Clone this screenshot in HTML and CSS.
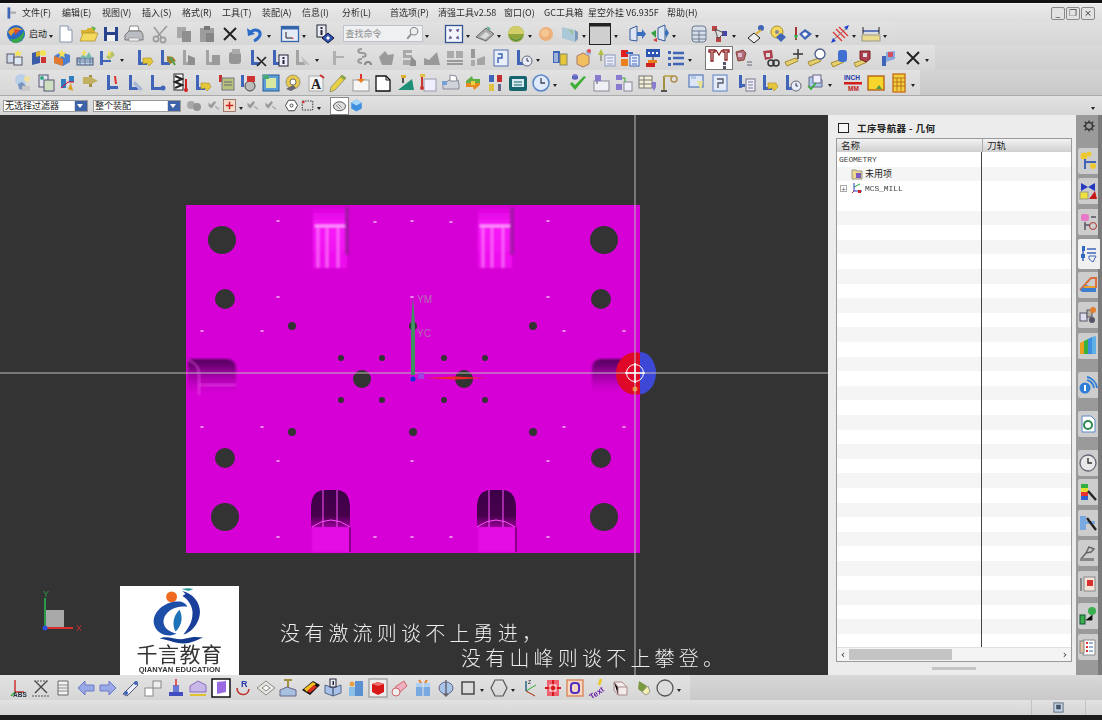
FILE: index.html
```html
<!DOCTYPE html>
<html lang="zh">
<head>
<meta charset="utf-8">
<title>NX CAM</title>
<link rel="stylesheet" href="styles.css">
</head>
<body>
<svg class="defs" aria-hidden="true">
<defs>
<g id="L"><path d="M3 2h3v12h6v3H3z" fill="#3f64b8"/></g>
<g id="Lg"><path d="M3 2h3v12h6v3H3z" fill="#a3a3a3"/></g>
<symbol id="nx" viewBox="0 0 20 20"><circle cx="10" cy="10" r="9" fill="#2b68c4"/><path d="M2 8c5-6 11-5 15-2-5-1-9 1-12 6z" fill="#e9a02a"/><path d="M4 15c5 1 10-1 14-8 1 6-3 12-9 12-2 0-4-2-5-4z" fill="#38a848"/><path d="M8 5l6 1-5 5z" fill="#e04c30"/></symbol>
<symbol id="page" viewBox="0 0 20 20"><path d="M4 2h8l4 4v12H4z" fill="#fff" stroke="#8794ab"/><path d="M12 2v4h4" fill="#dfe6f2" stroke="#8794ab"/></symbol>
<symbol id="open" viewBox="0 0 20 20"><path d="M2 6h5l2-2h7v6H2z" fill="#d8b232"/><path d="M1 17l3-8h15l-3 8z" fill="#f3d95c" stroke="#a98b22" stroke-width=".7"/><path d="M12 2l5 2-2 3z" fill="#5fae45"/></symbol>
<symbol id="save" viewBox="0 0 20 20"><rect x="3" y="3" width="14" height="14" fill="#29448c"/><rect x="6" y="3" width="8" height="5" fill="#e4e4e4"/><rect x="6" y="11" width="8" height="6" fill="#f2f2f2"/></symbol>
<symbol id="print" viewBox="0 0 20 20"><path d="M6 2h8l1 5H5z" fill="#fff" stroke="#888"/><path d="M1 11l4-4h12l2 4v5H1z" fill="#b9bcc2" stroke="#777"/><rect x="5" y="14" width="10" height="3" fill="#eee" stroke="#888" stroke-width=".6"/></symbol>
<symbol id="cut" viewBox="0 0 20 20"><g fill="none" stroke="#9b9b9b" stroke-width="1.600"><circle cx="5" cy="15" r="2.600"/><circle cx="12" cy="16" r="2.600"/><path d="M6 13L16 2M11 14L3 3"/></g></symbol>
<symbol id="copyg" viewBox="0 0 20 20"><rect x="3" y="3" width="9" height="11" fill="#a8a8a8"/><rect x="8" y="7" width="9" height="11" fill="#8f8f8f"/></symbol>
<symbol id="pasteg" viewBox="0 0 20 20"><rect x="3" y="4" width="14" height="14" fill="#9d9d9d"/><rect x="7" y="2" width="6" height="4" fill="#777"/><rect x="9" y="9" width="8" height="9" fill="#858585"/></symbol>
<symbol id="xx" viewBox="0 0 20 20"><path d="M4 4l12 12M16 4L4 16" stroke="#222" stroke-width="2" fill="none"/></symbol>
<symbol id="undo" viewBox="0 0 20 20"><path d="M5 9c4-5 11-3 10 2-1 3-4 5-6 6" fill="none" stroke="#2b6cc8" stroke-width="3"/><path d="M2 4l1 8 7-2z" fill="#2b6cc8"/></symbol>
<symbol id="view" viewBox="0 0 20 20"><rect x="1.500" y="2.500" width="17" height="15" fill="#e4ebf6" stroke="#3566ac" stroke-width="1.300"/><rect x="1.500" y="2.500" width="17" height="3" fill="#3566ac"/><path d="M6 8v6h6" stroke="#222" fill="none"/><path d="M12 13v2h2z" fill="#d33"/></symbol>
<symbol id="info" viewBox="0 0 20 20"><rect x="2" y="1" width="9" height="12" fill="#e9edf5" stroke="#223"/><rect x="5.500" y="3" width="2" height="2" fill="#223"/><rect x="5.500" y="6" width="2" height="5" fill="#223"/><path d="M13 9l6 5-6 5-6-5z" fill="#2f55b0" stroke="#113"/><path d="M13 12l2 2-2 2-2-2z" fill="#fff"/></symbol>
<symbol id="find" viewBox="0 0 20 20"><circle cx="12" cy="7" r="5" fill="#eee" stroke="#888" stroke-width="1.500"/><path d="M8 11l-5 6" stroke="#888" stroke-width="2.500"/></symbol>
<symbol id="fit" viewBox="0 0 20 20"><rect x="1.500" y="1.500" width="17" height="17" fill="#f2f5fb" stroke="#34528f" stroke-width="1.300"/><path d="M5 5l3 1-2 2zM15 5l-3 1 2 2zM5 15l3-1-2-2zM15 15l-3-1 2-2z" fill="#d84b4b" stroke="#2c62bd" stroke-width=".6"/></symbol>
<symbol id="dish" viewBox="0 0 20 20"><path d="M1 13L11 4l8 6-8 7z" fill="#a9acab" stroke="#666"/><path d="M5 13l6-5 4 3-5 4z" fill="#d8dcd8"/><path d="M12 2l4 3-3 1z" fill="#5a9"/></symbol>
<symbol id="sphere" viewBox="0 0 20 20"><circle cx="10" cy="10" r="8" fill="#8fa53b"/><path d="M2 10a8 8 0 0 1 16 0z" fill="#d3cf68"/><path d="M4 13c4 4 8 4 12 0-2 5-10 5-12 0z" fill="#3c8650"/></symbol>
<symbol id="orange" viewBox="0 0 20 20"><circle cx="9" cy="10" r="7" fill="#eeb078"/><circle cx="8" cy="9" r="4" fill="#f3c694"/></symbol>
<symbol id="door" viewBox="0 0 20 20"><path d="M2 3l13 3v12L2 14z" fill="#a9c8d8"/><path d="M15 6l3 2v7l-3 3z" fill="#7e9ab8"/><path d="M8 5l5 2v4z" fill="#9ec08a"/></symbol>
<symbol id="sq" viewBox="0 0 24 24"><rect x="1.500" y="1.500" width="21" height="21" fill="#cfcfcf" stroke="#222"/><rect x="1.500" y="1.500" width="21" height="3" fill="#222"/></symbol>
<symbol id="arr1" viewBox="0 0 20 20"><path d="M3 5l7-3v15l-7-1z" fill="#dde6f2" stroke="#345a9a"/><path d="M10 8h5V5l4 5-4 5v-3h-5z" fill="#3a6fbe"/></symbol>
<symbol id="arr2" viewBox="0 0 20 20"><path d="M8 4l7-3v16l-7-2z" fill="#dde6f2" stroke="#345a9a"/><path d="M15 7h1V4l3 5-3 5v-3h-1z" fill="#3a6fbe"/><path d="M1 9l5-3v8z" fill="#35a043"/><path d="M3 16l4-2v4z" fill="#d33"/></symbol>
<symbol id="layer" viewBox="0 0 20 20"><rect x="3" y="2" width="14" height="16" rx="3" fill="#d7dee9" stroke="#6b7a8f"/><path d="M3 7h14M3 11h14M3 15h14M10 7v11" stroke="#6b7a8f" fill="none"/></symbol>
<symbol id="net" viewBox="0 0 20 20"><rect x="2" y="2" width="5" height="5" fill="#b44"/><rect x="12" y="7" width="5" height="5" fill="#44a"/><rect x="6" y="13" width="5" height="5" fill="#b44"/><path d="M5 5l9 4-6 6z" fill="none" stroke="#555"/></symbol>
<symbol id="dia" viewBox="0 0 20 20"><path d="M7 9l6 5-6 5-6-5z" fill="#eee" stroke="#222"/><circle cx="14" cy="4" r="3" fill="#3f64b8"/><path d="M9 10l5-4" stroke="#e0b030" stroke-width="2"/></symbol>
<symbol id="dia2" viewBox="0 0 20 20"><circle cx="9" cy="8" r="6" fill="#f4d95c" stroke="#a88f22"/><path d="M13 9l5 4-5 5-5-5z" fill="#3f64b8"/><circle cx="9" cy="8" r="2" fill="#889"/></symbol>
<symbol id="dia3" viewBox="0 0 20 20"><path d="M12 5l7 5-7 6-6-6z" fill="#3f64b8"/><path d="M12 8l3 2-3 3-3-3z" fill="#fff"/><path d="M3 3v13" stroke="#a33" stroke-width="2"/><path d="M1 11l4 0-2 5z" fill="#3a4"/></symbol>
<symbol id="xarr" viewBox="0 0 20 20"><path d="M2 17L18 3" stroke="#777"/><path d="M6 5l9 9M9 3l9 9M3 8l9 9" stroke="#d33" stroke-width="1.300"/><path d="M1 19l5-2-3-3zM19 1l-5 2 3 3z" fill="#24c"/></symbol>
<symbol id="meas" viewBox="0 0 20 20"><rect x="1" y="11" width="18" height="6" fill="#e9d98c" stroke="#998"/><path d="M2 7h16" stroke="#24a" stroke-width="1.300"/><path d="M2 3v7M18 3v7" stroke="#222"/></symbol>
<symbol id="mill1" viewBox="0 0 20 20"><rect x="1" y="6" width="7" height="9" fill="#cfd9ea" stroke="#556"/><rect x="8" y="9" width="8" height="8" fill="#dfe8f5" stroke="#556"/><path d="M12 1l1 3 3 0-2 2 1 3-3-2-3 2 1-3-2-2 3 0z" fill="#f4e15a"/></symbol>
<symbol id="mill2" viewBox="0 0 20 20"><path d="M3 5l8-2v12l-8 2z" fill="#3a5ba8"/><path d="M7 4l4-1v5l-4 1z" fill="#e0b030"/><circle cx="14" cy="5" r="3" fill="#f4e15a"/><rect x="12" y="9" width="5" height="6" fill="#c33"/></symbol>
<symbol id="mill3" viewBox="0 0 20 20"><path d="M2 8l7-4 9 3v7l-7 4-9-3z" fill="#4d7fd0"/><path d="M2 8l9 3v7l-9-3z" fill="#e07a30"/><path d="M9 1l2 3 3 0-2 3 1 3-3-2-3 2 1-3-2-3 3 0z" fill="#f4e15a"/></symbol>
<symbol id="mill4" viewBox="0 0 20 20"><rect x="2" y="10" width="16" height="7" fill="#bcd3ea" stroke="#457"/><path d="M2 12h16M2 14h16M5 10v7M10 10v7M15 10v7" stroke="#457" stroke-width=".6"/><path d="M5 10l3-4 3 3 3-5 3 6z" fill="#7ba"/><path d="M9 1l1 3h2l-2 2 1 2-2-1-2 1 1-2-2-2h2z" fill="#f4e15a"/></symbol>
<symbol id="mill5" viewBox="0 0 20 20"><rect x="2" y="3" width="3" height="14" fill="#3f64b8"/><path d="M5 12h8v2H5z" fill="#3f64b8"/><path d="M8 9l6-6 3 4-6 5z" fill="#b9c26a"/><path d="M10 1l1 3 3 0-2 2 1 3-3-2z" fill="#f4e15a"/></symbol>
<symbol id="wren" viewBox="0 0 20 20"><use href="#L"/><path d="M8 10l8 0 2 4-4 4-2-3-4 1z" fill="#e5c63c" stroke="#a88f22" stroke-width=".6"/></symbol>
<symbol id="wren2" viewBox="0 0 20 20"><use href="#L"/><path d="M9 8l6 1 3 4-6 3-3-3z" fill="#a07f30"/><path d="M12 9l5 8" stroke="#56a14a" stroke-width="2"/></symbol>
<symbol id="g1" viewBox="0 0 20 20"><use href="#Lg"/><path d="M8 7l7 3v7H8z" fill="#8e8e8e"/></symbol>
<symbol id="g2" viewBox="0 0 20 20"><use href="#Lg"/><rect x="9" y="7" width="8" height="10" fill="#9a9a9a"/></symbol>
<symbol id="g3" viewBox="0 0 20 20"><rect x="4" y="4" width="12" height="12" rx="3" fill="#969696"/><rect x="7" y="1" width="8" height="5" fill="#aaa"/></symbol>
<symbol id="lx" viewBox="0 0 20 20"><use href="#L"/><path d="M9 9l9 9M18 9l-9 9" stroke="#222" stroke-width="1.600"/></symbol>
<symbol id="li" viewBox="0 0 20 20"><use href="#L"/><rect x="9" y="7" width="9" height="11" fill="#eef" stroke="#223"/><rect x="12.500" y="9" width="2" height="2" fill="#223"/><rect x="12.500" y="12" width="2" height="4" fill="#223"/></symbol>
<symbol id="lg" viewBox="0 0 20 20"><use href="#Lg"/><path d="M8 8l9 9-6-1z" fill="#bcbcbc"/></symbol>
<symbol id="gs1" viewBox="0 0 20 20"><path d="M3 3h3v14H3zM6 8h8v2H6z" fill="#b0b0b0"/></symbol>
<symbol id="mn" viewBox="0 0 20 20"><path d="M5 2h4v16H5z" fill="#3f64b8"/><path d="M9 8h8v3H9z" fill="#a8a8a8"/></symbol>
<symbol id="gs2" viewBox="0 0 20 20"><path d="M9 1C4 1 4 5 9 5c5 0 5 4 0 4M9 11c-5 0-5 4 0 4" stroke="#999" stroke-width="2" fill="none"/><path d="M12 17a3 3 0 0 1 6 0" stroke="#888" stroke-width="2" fill="none"/></symbol>
<symbol id="gs3" viewBox="0 0 20 20"><path d="M3 9l6-6 3 4 6-1-2 11H6z" fill="#9a9a9a"/></symbol>
<symbol id="gs4" viewBox="0 0 20 20"><path d="M4 2h9v3H7v2h6v3H4zM4 12h9v5H4z" fill="#aaa"/><path d="M12 8l5 5v5h-6z" fill="#8f8f8f"/></symbol>
<symbol id="gs5" viewBox="0 0 20 20"><path d="M2 17V10l5 2 8-8 3 13z" fill="#999"/></symbol>
<symbol id="gs6" viewBox="0 0 20 20"><rect x="2" y="3" width="7" height="7" fill="#aaa"/><rect x="11" y="3" width="7" height="7" fill="#aaa"/><path d="M2 13h16M2 16h16" stroke="#999" stroke-width="2"/></symbol>
<symbol id="gs7" viewBox="0 0 20 20"><rect x="3" y="1" width="4" height="9" fill="#999"/><rect x="3" y="12" width="4" height="6" fill="#aaa"/><path d="M9 11l8-3v9H9z" fill="#a5a5a5"/></symbol>
<symbol id="pg2" viewBox="0 0 20 20"><rect x="3" y="2" width="14" height="16" fill="#e8eefa" stroke="#5570b0"/><path d="M7 6h4v4H7v5" stroke="#3f64b8" stroke-width="1.500" fill="none"/></symbol>
<symbol id="clk" viewBox="0 0 20 20"><circle cx="10" cy="10" r="8" fill="#dfeafa" stroke="#5a88c8" stroke-width="1.600"/><path d="M10 5v5h4" stroke="#445" fill="none" stroke-width="1.300"/></symbol>
<symbol id="lclk" viewBox="0 0 20 20"><use href="#L"/><circle cx="13" cy="13" r="5" fill="#e8eefa" stroke="#667"/><path d="M13 10v3h2" stroke="#334" fill="none"/></symbol>
<symbol id="bars" viewBox="0 0 20 20"><path d="M2 3h3v3H2zM2 9h3v3H2zM2 15h3v3H2z" fill="#3f64b8"/><path d="M7 5h11M7 10h11M7 16h11" stroke="#3f64b8" stroke-width="2.600"/></symbol>
<symbol id="cols" viewBox="0 0 20 20"><rect x="2" y="3" width="7" height="12" fill="#3f64b8"/><rect x="9" y="6" width="7" height="11" fill="#e8c63c" stroke="#886"/><path d="M4 5v9M6 5v9" stroke="#fff"/></symbol>
<symbol id="cube" viewBox="0 0 20 20"><path d="M3 8l6-3 6 3v8l-6 3-6-3z" fill="#f0c060" stroke="#a76"/><rect x="12" y="2" width="5" height="5" fill="#a3bce0"/><circle cx="15" cy="3" r="2" fill="#e05050"/></symbol>
<symbol id="flag" viewBox="0 0 20 20"><path d="M4 1l3 6H1z" fill="#b5c040"/><path d="M4 7v6" stroke="#665"/><rect x="8" y="7" width="10" height="11" fill="#eef" stroke="#8a97b5"/><path d="M10 10h6M10 13h6M10 16h6" stroke="#8a97b5"/></symbol>
<symbol id="redl" viewBox="0 0 20 20"><rect x="1" y="2" width="7" height="7" fill="#e02020"/><rect x="1" y="11" width="7" height="7" fill="#e88020"/><rect x="10" y="7" width="9" height="11" fill="#e8effa" stroke="#3f64b8"/><path d="M12 10h5M12 13h5M12 16h5" stroke="#3f64b8"/><path d="M6 5h7" stroke="#3f64b8" stroke-width="2"/></symbol>
<symbol id="prog" viewBox="0 0 20 20"><rect x="3" y="1" width="14" height="8" fill="#2a55b0"/><path d="M5 5h2M9 5h2M13 5h2" stroke="#fff" stroke-width="2"/><path d="M10 9v3" stroke="#333"/><rect x="5" y="12" width="9" height="3" fill="#e88020"/><rect x="3" y="15" width="9" height="4" fill="#d02020"/></symbol>
<symbol id="act" viewBox="0 0 24 24"><path d="M2 4h6v2H6v9H4V6H2zM9 4l3 5 3-5M16 4h6v2h-2v8h-2V6h-2z" fill="none" stroke="#8a2020" stroke-width="1.300"/><rect x="16" y="16" width="3" height="3" fill="#556"/><rect x="16" y="20" width="3" height="3" fill="#556"/></symbol>
<symbol id="rtab" viewBox="0 0 20 20"><path d="M2 4l7-2 3 3-2 7-6 1z" fill="#b06a7a" stroke="#843"/><rect x="4" y="5" width="4" height="4" fill="#dbc"/><path d="M13 14h5M13 17h5" stroke="#667"/></symbol>
<symbol id="rkey" viewBox="0 0 20 20"><path d="M2 3l9-1 1 8-8 2z" fill="#b04050"/><rect x="5" y="5" width="4" height="4" fill="#ddd"/><circle cx="10" cy="15" r="3" fill="none" stroke="#333" stroke-width="1.500"/><circle cx="15" cy="15" r="3" fill="none" stroke="#333" stroke-width="1.500"/></symbol>
<symbol id="plus" viewBox="0 0 20 20"><path d="M1 14l11-4 2 3-11 5z" fill="#e8cf70" stroke="#a08a30"/><path d="M14 1v10M9 6h10" stroke="#333" stroke-width="1.400"/></symbol>
<symbol id="loop" viewBox="0 0 20 20"><path d="M1 14l11-4 2 3-11 5z" fill="#e8cf70" stroke="#a08a30"/><circle cx="13" cy="6" r="5" fill="#fff" stroke="#4a5a8a" stroke-width="1.300"/></symbol>
<symbol id="cylo" viewBox="0 0 20 20"><path d="M1 15l11-4 2 3-11 5z" fill="#e8cf70" stroke="#a08a30"/><rect x="8" y="2" width="9" height="12" rx="3" fill="#3f6fd0"/></symbol>
<symbol id="cubo" viewBox="0 0 20 20"><path d="M1 15l11-4 2 3-11 5z" fill="#e8cf70" stroke="#a08a30"/><path d="M7 3h10v8l-4 3-6-3z" fill="#b04050" stroke="#722"/><rect x="10" y="5" width="4" height="4" fill="#ddd"/></symbol>
<symbol id="blk" viewBox="0 0 20 20"><rect x="4" y="8" width="4" height="10" fill="#3f64b8"/><path d="M8 4l9-1v8l-9 3z" fill="#8aa8e0"/><rect x="10" y="4" width="5" height="5" fill="#d05060"/></symbol>
<symbol id="rec" viewBox="0 0 20 20"><circle cx="8" cy="7" r="6" fill="#b8d0e8"/><path d="M5 11l4-2 6 6-3 3-6-2z" fill="#7a94c0"/><circle cx="14" cy="6" r="3" fill="#f0e0a0"/><rect x="9" y="13" width="8" height="5" fill="#c8c8c8"/></symbol>
<symbol id="g4" viewBox="0 0 20 20"><rect x="3" y="2" width="9" height="12" fill="#e0e4ee" stroke="#557"/><rect x="8" y="7" width="10" height="11" fill="#cfe0c0" stroke="#557"/><circle cx="6" cy="5" r="2" fill="#3a8"/></symbol>
<symbol id="blu" viewBox="0 0 20 20"><path d="M3 6h5v9H3zM11 3h5v6h-5z" fill="#2f7fc0"/><path d="M3 15l7-6 6 0" stroke="#d03" fill="none"/><path d="M13 10l2 8-5-2z" fill="#d8a020"/></symbol>
<symbol id="lf" viewBox="0 0 20 20"><rect x="8" y="2" width="3" height="12" fill="#a09040"/><path d="M2 4h8l7 4-7 3H2z" fill="#c0b060"/></symbol>
<symbol id="l1" viewBox="0 0 20 20"><path d="M4 2h3v15H4z" fill="#3f64b8"/><path d="M7 13h8v3H7z" fill="#3f64b8"/><path d="M12 3l1 8" stroke="#d33" stroke-width="2"/></symbol>
<symbol id="l2" viewBox="0 0 20 20"><use href="#L"/><path d="M9 8l8 8-3 2-7-7z" fill="#a8b8d8"/></symbol>
<symbol id="l3" viewBox="0 0 20 20"><path d="M3 2h3v15H3z" fill="#3f64b8"/><path d="M6 14h7v3H6z" fill="#3f64b8"/><circle cx="15" cy="15" r="2.500" fill="#3f64b8"/></symbol>
<symbol id="zig" viewBox="0 0 20 20"><rect x="3" y="1" width="9" height="16" fill="#fff" stroke="#222"/><path d="M4 3l7 3-7 3 7 3-7 3" stroke="#222" stroke-width="2" fill="none"/><path d="M15 6v10" stroke="#d02020" stroke-width="2"/><circle cx="15" cy="17" r="2" fill="#d02020"/></symbol>
<symbol id="rcy" viewBox="0 0 20 20"><rect x="3" y="2" width="3" height="7" fill="#c83030"/><rect x="6" y="5" width="12" height="12" fill="#b8c27a" stroke="#778"/><path d="M8 9h8M8 12h8" stroke="#667"/></symbol>
<symbol id="lbox" viewBox="0 0 20 20"><rect x="3" y="2" width="3" height="12" fill="#3f64b8"/><circle cx="12" cy="13" r="5" fill="#bbb" stroke="#444"/><rect x="9" y="3" width="8" height="6" fill="#c33"/></symbol>
<symbol id="mon" viewBox="0 0 20 20"><rect x="2" y="2" width="16" height="16" fill="#5a9fd8" stroke="#2a5a9a"/><rect x="5" y="5" width="10" height="10" fill="#d8e8a0"/><path d="M2 2h6v4H2z" fill="#4a7"/></symbol>
<symbol id="sw" viewBox="0 0 20 20"><circle cx="10" cy="9" r="7" fill="#e8c94c" stroke="#997"/><circle cx="10" cy="9" r="3" fill="#fff" stroke="#776"/><path d="M3 16l7-4 3 3-5 3z" fill="#667"/></symbol>
<symbol id="atxt" viewBox="0 0 20 20"><rect x="3" y="3" width="14" height="15" fill="#f4f4f4" stroke="#aaa"/><text x="5" y="16" font-family="Liberation Serif" font-size="14" font-weight="700" fill="#222">A</text><path d="M14 2l4 3" stroke="#c33" stroke-width="2"/></symbol>
<symbol id="pen" viewBox="0 0 20 20"><path d="M14 2l4 3-11 12-5 2 1-5z" fill="#e8d040" stroke="#997"/><path d="M14 2l4 3-2 2-4-3z" fill="#8a4"/></symbol>
<symbol id="pup" viewBox="0 0 20 20"><rect x="2" y="7" width="16" height="11" fill="#f6f6f6" stroke="#999"/><path d="M10 1v7" stroke="#d33" stroke-width="2"/><path d="M6 6h8l-4 4z" fill="#e88020"/></symbol>
<symbol id="pgb" viewBox="0 0 20 20"><path d="M3 3h10l4 4v11H3z" fill="#fff" stroke="#111" stroke-width="1.300"/><path d="M13 3v4h4" fill="none" stroke="#111"/></symbol>
<symbol id="tri" viewBox="0 0 20 20"><path d="M2 17L16 6l2 11z" fill="#1f8f78"/><path d="M7 2v8" stroke="#222" stroke-width="1.500"/><path d="M5 2h5v3H5z" fill="#e0b030"/></symbol>
<symbol id="ptr" viewBox="0 0 20 20"><rect x="6" y="6" width="12" height="12" fill="#eef" stroke="#99a"/><path d="M4 2v13" stroke="#c33" stroke-width="2"/><circle cx="4" cy="15" r="2" fill="#c33"/><rect x="2" y="1" width="5" height="3" fill="#e0c040"/></symbol>
<symbol id="prn2" viewBox="0 0 20 20"><path d="M2 12l6-5h9l1 5v4H2z" fill="#d0d4da" stroke="#889"/><path d="M9 2l6 1 1 5H9z" fill="#fff" stroke="#889"/><rect x="1" y="8" width="5" height="4" fill="#7aa0d8"/></symbol>
<symbol id="swp" viewBox="0 0 20 20"><path d="M3 8l6-5 1 3h7v4H3z" fill="#5fae45"/><path d="M17 12l-6 5-1-3H3v-4h14z" fill="#e88a20"/><rect x="8" y="8" width="4" height="4" fill="#eed040"/></symbol>
<symbol id="tls" viewBox="0 0 20 20"><rect x="3" y="2" width="5" height="7" fill="#3f64b8"/><rect x="11" y="2" width="5" height="7" fill="#c03030"/><rect x="3" y="11" width="5" height="7" fill="#e0c040"/><rect x="12" y="11" width="3" height="7" fill="#668"/></symbol>
<symbol id="calc" viewBox="0 0 20 20"><rect x="1" y="3" width="18" height="15" rx="2" fill="#17666f"/><rect x="4" y="6" width="12" height="8" fill="#d6e8f0"/><path d="M6 9h8M6 12h8" stroke="#17666f"/></symbol>
<symbol id="chk" viewBox="0 0 20 20"><path d="M2 11l5 6L18 4l-2-1-9 9-3-3z" fill="#3fae36"/><circle cx="7" cy="4" r="3" fill="#8a7ad0"/><rect x="4" y="3" width="6" height="3" fill="#5a6ac0"/></symbol>
<symbol id="bx2" viewBox="0 0 20 20"><rect x="3" y="8" width="15" height="10" fill="#eef0f6" stroke="#889"/><rect x="4" y="2" width="6" height="6" fill="#8a7ad0"/><path d="M6 8v3" stroke="#556"/></symbol>
<symbol id="bx3" viewBox="0 0 20 20"><rect x="2" y="2" width="6" height="5" fill="#8a7ad0"/><rect x="10" y="9" width="8" height="9" fill="#eef0f6" stroke="#889"/><rect x="2" y="11" width="6" height="6" fill="#8a7ad0"/><path d="M8 5h3v4" stroke="#3a3" fill="none"/></symbol>
<symbol id="tbl" viewBox="0 0 20 20"><rect x="2" y="3" width="13" height="12" fill="#f4f0d8" stroke="#777"/><path d="M2 7h13M2 11h13M7 3v12" stroke="#777"/><path d="M15 9h4v5l-2 4-2-4z" fill="#8a7ad0"/></symbol>
<symbol id="pin" viewBox="0 0 20 20"><path d="M4 3v15" stroke="#a09040" stroke-width="2"/><path d="M4 3h9" stroke="#c0b060" stroke-width="2"/><circle cx="14" cy="6" r="3" fill="none" stroke="#b09050" stroke-width="1.500"/><path d="M1 18h6" stroke="#555" stroke-width="2"/></symbol>
<symbol id="frm" viewBox="0 0 20 20"><rect x="2" y="2" width="14" height="12" fill="#dde6f5" stroke="#6a88c0" stroke-width="1.400"/><path d="M10 8l6 0-2 10z" fill="#e4e090"/><path d="M4 3h5v3H4z" fill="#b6c8e8"/></symbol>
<symbol id="frm2" viewBox="0 0 20 20"><rect x="3" y="2" width="14" height="16" fill="#e4ebf8" stroke="#7a94c8" stroke-width="1.300"/><path d="M7 6h6v4H8v5" stroke="#556" fill="none" stroke-width="1.300"/></symbol>
<symbol id="lst" viewBox="0 0 20 20"><path d="M2 2h3v13H2zM5 11h3v3H5z" fill="#3f64b8"/><rect x="9" y="6" width="9" height="12" fill="#eef" stroke="#778"/><path d="M11 9h5M11 12h5M11 15h5" stroke="#778"/></symbol>
<symbol id="cg" viewBox="0 0 20 20"><path d="M3 4h10l3 3v7H3z" fill="#a8c8e8" stroke="#668"/><rect x="7" y="2" width="8" height="8" fill="#eef" stroke="#668"/><path d="M2 13l3 3 5-6" stroke="#3a3" fill="none" stroke-width="1.600"/></symbol>
<symbol id="inch" viewBox="0 0 20 20"><text x="1" y="7" font-family="Liberation Sans" font-size="6.500" font-weight="700" fill="#2538a8">INCH</text><rect x="1" y="9" width="18" height="2.500" fill="#d02020"/><text x="5" y="18" font-family="Liberation Sans" font-size="6.500" font-weight="700" fill="#c01818">MM</text></symbol>
<symbol id="note" viewBox="0 0 20 20"><rect x="2" y="3" width="16" height="14" fill="#f6d52c" stroke="#b25a10" stroke-width="1.300"/><path d="M13 12l3 4h-6z" fill="#4a9a4a"/></symbol>
<symbol id="abacus" viewBox="0 0 20 20"><rect x="4" y="1" width="12" height="18" fill="#f0d040" stroke="#c86a10" stroke-width="1.300"/><path d="M4 5h12M4 9h12M4 13h12M8 5v13M12 5v13" stroke="#b06010" stroke-width=".8"/></symbol>
<symbol id="gray" viewBox="0 0 20 20"><circle cx="7" cy="9" r="4" fill="#a8a8a8"/><circle cx="13" cy="11" r="4" fill="#949494"/></symbol>
<symbol id="wg" viewBox="0 0 20 20"><path d="M2 6l3 3 5-5 2 2-6 8-4-3z" fill="#9a9a9a"/><path d="M11 11l5 4" stroke="#a8a8a8" stroke-width="2"/></symbol>
<symbol id="sel" viewBox="0 0 20 20"><rect x="2" y="2" width="16" height="16" fill="#f3dcc8" stroke="#8a5a50"/><path d="M10 5v10M5 10h10" stroke="#d02020" stroke-width="2"/></symbol>
<symbol id="tgt" viewBox="0 0 20 20"><path d="M6 3h8l4 7-4 7H6l-4-7z" fill="#fff" stroke="#444" stroke-width="1.300"/><circle cx="10" cy="10" r="2" fill="none" stroke="#444" stroke-width="1.300"/></symbol>
<symbol id="dsh" viewBox="0 0 20 20"><rect x="3" y="4" width="14" height="12" fill="none" stroke="#333" stroke-dasharray="2 1.500" stroke-width="1.300"/><path d="M3 4h3v3H3z" fill="#d33"/></symbol>
<symbol id="mous" viewBox="0 0 20 20"><ellipse cx="10" cy="11" rx="8" ry="6" fill="#ddd" stroke="#555" stroke-width="1.300"/><path d="M5 9l6 6M8 8l5 5" stroke="#777"/></symbol>
<symbol id="cub2" viewBox="0 0 20 20"><path d="M10 2l7 4v8l-7 4-7-4V6z" fill="#3f8fe0"/><path d="M3 6l7 4 7-4-7-4z" fill="#a8d8f8"/></symbol>
<symbol id="abs" viewBox="0 0 20 20"><path d="M7 2v12h9" stroke="#c33" fill="none" stroke-width="1.500"/><path d="M7 14L3 18" stroke="#3a3" stroke-width="1.500"/><text x="5" y="19" font-family="Liberation Sans" font-size="6.500" font-weight="700" fill="#234">ABS</text></symbol>
<symbol id="xd" viewBox="0 0 20 20"><path d="M4 3l12 12M16 3L4 15" stroke="#444" stroke-width="1.300"/><path d="M1 18h18M3 3h14" stroke="#555" stroke-dasharray="2 1"/></symbol>
<symbol id="dcl" viewBox="0 0 20 20"><path d="M5 3h10v14H5z" fill="#f2f2f2" stroke="#666"/><path d="M5 7h10M5 10h10M5 13h10" stroke="#888"/></symbol>
<symbol id="al" viewBox="0 0 20 20"><path d="M18 7h-9V3L2 10l7 7v-4h9z" fill="#9aa8e8" stroke="#6a7ac8"/></symbol>
<symbol id="ar" viewBox="0 0 20 20"><path d="M2 7h9V3l7 7-7 7v-4H2z" fill="#9aa8e8" stroke="#6a7ac8"/></symbol>
<symbol id="dgn" viewBox="0 0 20 20"><path d="M2 16L14 4l3 3L6 18z" fill="#e8effa" stroke="#557"/><circle cx="5" cy="15" r="2" fill="#3f64b8"/><circle cx="15" cy="5" r="2" fill="#3f64b8"/></symbol>
<symbol id="sqs" viewBox="0 0 20 20"><rect x="2" y="10" width="8" height="8" fill="#fff" stroke="#888"/><rect x="10" y="3" width="8" height="7" fill="#eee" stroke="#888"/></symbol>
<symbol id="stp" viewBox="0 0 20 20"><rect x="3" y="14" width="14" height="4" fill="#3f4fc0"/><rect x="7" y="7" width="6" height="7" fill="#6a78d8"/><path d="M10 1v7" stroke="#d33" stroke-width="1.500"/></symbol>
<symbol id="pkt" viewBox="0 0 20 20"><path d="M2 8l8-5 8 4v7H2z" fill="#c8b8e8" stroke="#8a6ac0"/><path d="M2 17h16" stroke="#e0c030" stroke-width="2"/></symbol>
<symbol id="pcb" viewBox="0 0 20 20"><rect x="1" y="1" width="18" height="18" fill="#fff" stroke="#111" stroke-width="1.500"/><path d="M6 4l9-1v11l-9 2z" fill="#9a6ae0"/></symbol>
<symbol id="rr" viewBox="0 0 20 20"><path d="M4 10c0 8 11 9 12 1" stroke="#c03030" fill="none" stroke-width="1.600"/><text x="8" y="9" font-family="Liberation Sans" font-size="9" font-weight="700" fill="#2538a8">R</text></symbol>
<symbol id="rhb" viewBox="0 0 20 20"><path d="M10 3l9 7-9 7-9-7z" fill="#e8e8e0" stroke="#888"/><path d="M10 7l4 3-4 3-4-3z" fill="#f6f6f6" stroke="#888"/></symbol>
<symbol id="tee" viewBox="0 0 20 20"><path d="M6 2h8M10 2v8" stroke="#a09040" stroke-width="2"/><path d="M2 12l7-3 9 3v6H2z" fill="#a8c0e0" stroke="#668"/></symbol>
<symbol id="stk" viewBox="0 0 20 20"><path d="M1 12L12 3l7 4-10 10z" fill="#111"/><path d="M3 11l9-7 3 2-9 8z" fill="#f0c020"/><path d="M6 13l7-6 3 2-7 6z" fill="#d83020"/></symbol>
<symbol id="ibox" viewBox="0 0 20 20"><path d="M2 7l8 3v8l-8-3zM18 7l-8 3v8l8-3z" fill="#a8c0e8" stroke="#568"/><rect x="7" y="1" width="6" height="8" fill="#eee" stroke="#224"/><rect x="9.500" y="3" width="1.500" height="4" fill="#224"/></symbol>
<symbol id="blk2" viewBox="0 0 20 20"><rect x="3" y="9" width="7" height="9" fill="#8ac0e8"/><rect x="9" y="3" width="8" height="15" fill="#5a90d0"/><circle cx="6" cy="6" r="2.500" fill="#e8a040"/></symbol>
<symbol id="rbx" viewBox="0 0 20 20"><rect x="1" y="1" width="18" height="18" fill="#eee" stroke="#888"/><path d="M4 6l6-2 6 2v8l-6 3-6-3z" fill="#d81818"/><path d="M4 6l6 2 6-2-6-2z" fill="#f07070"/></symbol>
<symbol id="pb" viewBox="0 0 20 20"><path d="M4 9l9-6 3 5-8 7z" fill="#f0b0c0" stroke="#c66"/><circle cx="5" cy="14" r="4" fill="#eee" stroke="#c66"/></symbol>
<symbol id="gift" viewBox="0 0 20 20"><rect x="3" y="8" width="14" height="10" fill="#7aa8e0"/><rect x="3" y="5" width="14" height="4" fill="#b0d0f0"/><path d="M6 2l2 3M14 2l-2 3" stroke="#e08030" stroke-width="2"/><path d="M10 5v13" stroke="#e8e8e8"/></symbol>
<symbol id="cyl" viewBox="0 0 20 20"><ellipse cx="10" cy="10" rx="7" ry="6" fill="#a8c4e8" stroke="#668"/><path d="M10 2v16" stroke="#667" stroke-width="1.500"/><path d="M7 16l3 3 3-3z" fill="#666"/></symbol>
<symbol id="rct" viewBox="0 0 20 20"><rect x="4" y="4" width="12" height="12" fill="none" stroke="#333" stroke-width="1.300"/></symbol>
<symbol id="hex" viewBox="0 0 20 20"><path d="M6 2h8l4 8-4 8H6l-4-8z" fill="none" stroke="#555" stroke-width="1.200"/></symbol>
<symbol id="xyz" viewBox="0 0 20 20"><path d="M6 3v10l9 5M6 13l10-6" stroke="#3a3" fill="none"/><path d="M6 13l9 5" stroke="#d33"/><path d="M6 3v10" stroke="#24a"/><text x="8" y="6" font-family="Liberation Sans" font-size="5" fill="#222">Z</text></symbol>
<symbol id="redg" viewBox="0 0 20 20"><rect x="4" y="2" width="12" height="16" fill="#f06070"/><path d="M2 10h16M10 2v16" stroke="#d81818" stroke-width="2"/><rect x="7" y="7" width="6" height="6" fill="none" stroke="#fff"/></symbol>
<symbol id="ord" viewBox="0 0 20 20"><rect x="2" y="2" width="16" height="16" fill="#f8d8c0" stroke="#d88050" stroke-width="1.300"/><rect x="6" y="5" width="8" height="10" rx="3" fill="none" stroke="#5030c0" stroke-width="2"/></symbol>
<symbol id="text2" viewBox="0 0 20 20"><text x="0" y="18" font-family="Liberation Sans" font-size="8" font-weight="700" fill="#6a20a8" transform="rotate(-35 8 14)">Text</text><path d="M13 1l-2 6" stroke="#e8c820" stroke-width="2.500"/></symbol>
<symbol id="paleb" viewBox="0 0 20 20"><path d="M4 4h8l5 5v8H8l-4-5z" fill="#f4ecec" stroke="#a88"/><path d="M8 9l9 0M4 4l4 5v8" stroke="#a88"/></symbol>
<symbol id="lamp" viewBox="0 0 20 20"><path d="M6 3l8 5-5 6-4-3z" fill="#7a9a40"/><path d="M9 14l6-6 2 6-4 3z" fill="#f6f0b0" stroke="#998"/></symbol>
<symbol id="ring" viewBox="0 0 20 20"><circle cx="10" cy="10" r="8" fill="#dcdcdc" stroke="#555" stroke-width="1.300"/></symbol>
<symbol id="gear" viewBox="0 0 20 20"><circle cx="10" cy="10" r="5" fill="none" stroke="#333" stroke-width="2"/><path d="M10 2v3M10 15v3M2 10h3M15 10h3M4 4l2 2M14 14l2 2M16 4l-2 2M6 14l-2 2" stroke="#333" stroke-width="2"/></symbol>
<symbol id="t1" viewBox="0 0 20 20"><circle cx="6" cy="5" r="3.500" fill="#eec830"/><circle cx="11" cy="3" r="2.500" fill="#eec830"/><path d="M7 8v10M7 11h11" stroke="#3f64b8" stroke-width="2"/><circle cx="15" cy="15" r="3" fill="#eec830"/></symbol>
<symbol id="t2" viewBox="0 0 20 20"><path d="M3 2l7 4 7-4v8l-7-4-7 4z" fill="#2538c0"/><rect x="2" y="11" width="8" height="7" fill="#f0e040" stroke="#998"/><path d="M11 18l6-8 2 8z" fill="#c81818"/></symbol>
<symbol id="t3" viewBox="0 0 20 20"><rect x="3" y="2" width="8" height="7" rx="2" fill="#e878c8"/><path d="M13 5h5M7 10v8M7 13h5" stroke="#556" stroke-width="1.500"/><circle cx="15" cy="14" r="3.500" fill="none" stroke="#a33"/></symbol>
<symbol id="t4" viewBox="0 0 20 20"><rect x="3" y="2" width="3" height="5" fill="#2f6ac0"/><path d="M8 5h9M8 9h9M4 7v10" stroke="#3f64b8" stroke-width="1.500"/><rect x="2" y="10" width="4" height="4" fill="#2f6ac0"/><path d="M10 12l7 0-3 6-4-3z" fill="none" stroke="#3f64b8"/></symbol>
<symbol id="t5" viewBox="0 0 20 20"><path d="M2 15L13 3h5v9H7z" fill="none" stroke="#d87040" stroke-width="2"/><path d="M2 15l6-5 10 3v4H4z" fill="#3f7fd0"/><path d="M6 12h11" stroke="#f0a030" stroke-width="2"/></symbol>
<symbol id="t6" viewBox="0 0 20 20"><rect x="2" y="8" width="7" height="8" fill="#dde" stroke="#556"/><rect x="9" y="5" width="5" height="7" fill="#b8b0a0" stroke="#556"/><circle cx="15" cy="5" r="3" fill="#e08030"/><circle cx="14" cy="15" r="3" fill="#556"/></symbol>
<symbol id="t7" viewBox="0 0 20 20"><path d="M2 7l4-2v13H2z" fill="#e8a020"/><path d="M6 5l4-2v15H6z" fill="#38b040"/><path d="M10 3l4-2v17h-4z" fill="#3f8fe0"/><path d="M14 1l4-1v18h-4z" fill="#60b0e8"/></symbol>
<symbol id="t8" viewBox="0 0 20 20"><circle cx="7" cy="13" r="5.500" fill="#2f7fd8"/><rect x="6" y="10" width="2" height="6" fill="#fff"/><path d="M9 5a10 10 0 0 1 7 8M9 2a13 13 0 0 1 10 11" stroke="#2f7fd8" stroke-width="1.800" fill="none"/></symbol>
<symbol id="t9" viewBox="0 0 20 20"><path d="M4 2h9l4 4v12H4z" fill="#fff" stroke="#5a88c8"/><circle cx="10" cy="11" r="4" fill="none" stroke="#2a8a50" stroke-width="2"/></symbol>
<symbol id="t10" viewBox="0 0 20 20"><circle cx="10" cy="10" r="8" fill="#e8e8e8" stroke="#667" stroke-width="1.300"/><path d="M10 5v5h4" stroke="#333" fill="none" stroke-width="1.400"/></symbol>
<symbol id="t11" viewBox="0 0 20 20"><rect x="3" y="2" width="7" height="4" fill="#30b040"/><rect x="3" y="6" width="7" height="4" fill="#e8e030"/><rect x="3" y="10" width="7" height="4" fill="#e83030"/><rect x="3" y="14" width="7" height="4" fill="#3060d0"/><path d="M10 9l8 9" stroke="#222" stroke-width="2.400"/></symbol>
<symbol id="t12" viewBox="0 0 20 20"><path d="M2 3h6v14H2z" fill="#7aa8e0"/><path d="M8 8h9v3H8z" fill="#7aa8e0"/><path d="M9 5l9 12" stroke="#222" stroke-width="2.400"/></symbol>
<symbol id="t13" viewBox="0 0 20 20"><path d="M3 16l5-6M8 10l3-6 5 2-3 3z" stroke="#666" stroke-width="1.500" fill="#ccc"/><rect x="2" y="15" width="14" height="3" fill="#888"/></symbol>
<symbol id="t14" viewBox="0 0 20 20"><rect x="6" y="3" width="11" height="14" fill="#f4e4d8" stroke="#888"/><rect x="9" y="6" width="6" height="6" fill="#d83030"/><path d="M3 4v13" stroke="#888" stroke-width="2"/></symbol>
<symbol id="t15" viewBox="0 0 20 20"><circle cx="14" cy="5" r="4" fill="#3cb050"/><path d="M14 9v5H8" stroke="#222"/><rect x="2" y="9" width="5" height="9" fill="#3cb050" stroke="#153"/></symbol>
<symbol id="t16" viewBox="0 0 20 20"><path d="M5 3h12v15H5z" fill="#fff" stroke="#888"/><rect x="2" y="4" width="4" height="12" fill="#e0c0a0" stroke="#888"/><path d="M8 6h2M8 10h2M8 14h2" stroke="#d33" stroke-width="2"/><path d="M11 6h4M11 10h4M11 14h4" stroke="#36a"/></symbol>
</defs>
</svg>
<div class="app">
  <div class="topline"></div>
  <div class="menubar">
    <svg class="menu-ic"><use href="#mn"/></svg>
    <span class="m m40">文件(F)</span><span class="m m40">编辑(E)</span><span class="m m40">视图(V)</span><span class="m m40">插入(S)</span><span class="m m40">格式(R)</span><span class="m m40">工具(T)</span><span class="m m40">装配(A)</span><span class="m m40">信息(I)</span><span class="m m48">分析(L)</span><span class="m m48">首选项(P)</span><span class="m m66">清强工具v2.58</span><span class="m m40">窗口(O)</span><span class="m m44">GC工具箱</span><span class="m m79">星空外挂 V6.935F</span><span class="m m40">帮助(H)</span>
    <div class="winbtns"><span class="wb">_</span><span class="wb">❐</span><span class="wb">×</span></div>
  </div>
  <div class="row r1">
    <div class="tb tb1">
      <svg class="ic"><use href="#nx"/></svg><span class="start">启动</span><i class="dd"></i>
      <div class="g g22 ml1"><svg class="ic"><use href="#page"/></svg><svg class="ic"><use href="#open"/></svg><svg class="ic"><use href="#save"/></svg><svg class="ic"><use href="#print"/></svg></div>
      <div class="g g3 ml7"><svg class="ic"><use href="#cut"/></svg><svg class="ic"><use href="#copyg"/></svg><svg class="ic"><use href="#pasteg"/></svg><svg class="ic"><use href="#xx"/></svg></div>
      <svg class="ic ml5"><use href="#undo"/></svg><i class="dd"></i>
      <svg class="ic ml7"><use href="#view"/></svg><i class="dd"></i>
      <svg class="ic ml7"><use href="#info"/></svg>
      <div class="search"><span>查找命令</span><svg class="ic-s"><use href="#find"/></svg></div><i class="dd"></i>
      <svg class="ic ml13"><use href="#fit"/></svg><i class="dd"></i>
      <svg class="ic ml3"><use href="#dish"/></svg><i class="dd"></i>
      <svg class="ic ml3"><use href="#sphere"/></svg><i class="dd"></i>
      <svg class="ic ml3"><use href="#orange"/></svg><svg class="ic ml3"><use href="#door"/></svg><i class="dd"></i>
      <svg class="ic-l"><use href="#sq"/></svg><i class="dd"></i>
      <svg class="ic ml7"><use href="#arr1"/></svg><svg class="ic ml3"><use href="#arr2"/></svg><i class="dd"></i>
      <svg class="ic ml11"><use href="#layer"/></svg><svg class="ic ml1"><use href="#net"/></svg><i class="dd"></i>
      <svg class="ic ml9"><use href="#dia"/></svg><svg class="ic ml1"><use href="#dia2"/></svg>
      <svg class="ic ml5"><use href="#dia3"/></svg><i class="dd"></i>
      <svg class="ic ml9"><use href="#xarr"/></svg><i class="dd"></i>
      <svg class="ic ml3"><use href="#meas"/></svg><i class="dd"></i>
    </div>
  </div>
  <div class="row r2">
    <div class="tb tb2">
      <div class="g g3"><svg class="ic"><use href="#mill1"/></svg><svg class="ic"><use href="#mill2"/></svg><svg class="ic"><use href="#mill3"/></svg><svg class="ic"><use href="#mill4"/></svg><svg class="ic"><use href="#mill5"/></svg></div><i class="dd"></i>
      <div class="g g22 ml9"><svg class="ic"><use href="#wren"/></svg><svg class="ic"><use href="#wren2"/></svg><svg class="ic"><use href="#g1"/></svg><svg class="ic"><use href="#g2"/></svg><svg class="ic"><use href="#g3"/></svg><svg class="ic"><use href="#lx"/></svg><svg class="ic"><use href="#li"/></svg><svg class="ic"><use href="#lg"/></svg></div><i class="dd"></i>
      <div class="g g3 ml9"><svg class="ic"><use href="#gs1"/></svg><svg class="ic"><use href="#gs2"/></svg><svg class="ic"><use href="#gs3"/></svg><svg class="ic"><use href="#gs4"/></svg><svg class="ic"><use href="#gs5"/></svg><svg class="ic"><use href="#gs6"/></svg><svg class="ic"><use href="#gs7"/></svg><svg class="ic"><use href="#pg2"/></svg><svg class="ic"><use href="#lclk"/></svg></div><i class="dd"></i>
      <div class="g g3 ml9"><svg class="ic"><use href="#cols"/></svg><svg class="ic"><use href="#cube"/></svg><svg class="ic"><use href="#flag"/></svg><svg class="ic"><use href="#redl"/></svg><svg class="ic"><use href="#prog"/></svg><svg class="ic"><use href="#bars"/></svg></div><i class="dd"></i>
      <span class="active ml11"><svg class="ic-l"><use href="#act"/></svg></span>
      <svg class="ic ml1"><use href="#rtab"/></svg>
      <div class="g g3 ml7"><svg class="ic"><use href="#rkey"/></svg><svg class="ic"><use href="#plus"/></svg><svg class="ic"><use href="#loop"/></svg><svg class="ic"><use href="#cylo"/></svg><svg class="ic"><use href="#cubo"/></svg></div>
      <svg class="ic ml5"><use href="#blk"/></svg><svg class="ic ml5"><use href="#xx"/></svg><i class="dd"></i>
    </div>
  </div>
  <div class="row r3">
    <div class="tb tb3">
      <div class="g g22 pl13"><svg class="ic"><use href="#rec"/></svg><svg class="ic"><use href="#g4"/></svg><svg class="ic"><use href="#blu"/></svg><svg class="ic"><use href="#lf"/></svg><svg class="ic"><use href="#l1"/></svg><svg class="ic"><use href="#l2"/></svg><svg class="ic"><use href="#l3"/></svg><svg class="ic"><use href="#zig"/></svg><svg class="ic"><use href="#wren"/></svg><svg class="ic"><use href="#rcy"/></svg><svg class="ic"><use href="#lbox"/></svg><svg class="ic"><use href="#mon"/></svg><svg class="ic"><use href="#sw"/></svg><svg class="ic"><use href="#atxt"/></svg><svg class="ic"><use href="#pen"/></svg><svg class="ic"><use href="#pup"/></svg><svg class="ic"><use href="#pgb"/></svg><svg class="ic"><use href="#tri"/></svg><svg class="ic"><use href="#ptr"/></svg><svg class="ic"><use href="#prn2"/></svg><svg class="ic"><use href="#swp"/></svg><svg class="ic"><use href="#tls"/></svg><svg class="ic"><use href="#calc"/></svg><svg class="ic"><use href="#clk"/></svg></div><i class="dd"></i>
      <div class="g g3 ml9"><svg class="ic"><use href="#chk"/></svg><svg class="ic"><use href="#bx2"/></svg><svg class="ic"><use href="#bx3"/></svg><svg class="ic"><use href="#tbl"/></svg></div>
      <svg class="ic ml3"><use href="#pin"/></svg>
      <svg class="ic ml7"><use href="#frm"/></svg><svg class="ic ml3"><use href="#frm2"/></svg>
      <div class="g g3 ml7"><svg class="ic"><use href="#lst"/></svg><svg class="ic"><use href="#wren"/></svg><svg class="ic"><use href="#lclk"/></svg><svg class="ic"><use href="#cg"/></svg></div><i class="dd"></i>
      <div class="g g3 ml9"><svg class="ic"><use href="#inch"/></svg><svg class="ic"><use href="#note"/></svg><svg class="ic"><use href="#abacus"/></svg></div><i class="dd"></i>
    </div>
  </div>
  <div class="row r4">
    <div class="select sel1"><span>无选择过滤器</span><b class="drop"></b></div>
    <div class="select sel2"><span>整个装配</span><b class="drop"></b></div>
    <svg class="ic ml3"><use href="#gray"/></svg>
    <svg class="ic-s ml3"><use href="#wg"/></svg><svg class="ic-s"><use href="#sel"/></svg><i class="dd"></i>
    <svg class="ic-s ml1"><use href="#wg"/></svg><svg class="ic-s ml3"><use href="#wg"/></svg>
    <svg class="ic-s ml5"><use href="#tgt"/></svg><svg class="ic-s ml1"><use href="#dsh"/></svg><i class="dd"></i>
    <span class="active-s ml7"><svg class="ic-s"><use href="#mous"/></svg></span><svg class="ic-s"><use href="#cub2"/></svg>
    <i class="dd end"></i>
  </div>
  <main class="main">
    <div class="viewport">
      <svg class="scene" viewBox="0 115 828 560" aria-hidden="true">
        <defs>
          <linearGradient id="pTop" x1="0" x2="0" y1="0" y2="1"><stop offset="0" stop-color="#dc00dc"/><stop offset=".3" stop-color="#f81af8"/><stop offset="1" stop-color="#ec0cec"/></linearGradient>
          <linearGradient id="pDark" x1="0" x2="0" y1="0" y2="1"><stop offset="0" stop-color="#500058"/><stop offset=".45" stop-color="#a000a4"/><stop offset=".75" stop-color="#c800c8"/><stop offset="1" stop-color="#d800d8"/></linearGradient>
          <linearGradient id="pArch" x1="0" x2="0" y1="0" y2="1"><stop offset="0" stop-color="#3c0048"/><stop offset=".7" stop-color="#48004c"/><stop offset="1" stop-color="#980098"/></linearGradient>
          <filter id="soft" x="-20%" y="-20%" width="140%" height="140%"><feGaussianBlur stdDeviation="1"/></filter>
        </defs>
        <rect x="186" y="205" width="454" height="348" fill="#d600d6"/>
        <g filter="url(#soft)">
        <rect x="313" y="208" width="34" height="60" fill="url(#pTop)"/><rect x="345" y="207" width="4" height="48" fill="#a412a8"/><path d="M318 225v43M327 225v43M338 225v43" stroke="#ff80ff" stroke-width="1.500"/><path d="M315 226h30" stroke="#ffa0ff" stroke-width="2"/>
        <rect x="478" y="208" width="34" height="60" fill="url(#pTop)"/><rect x="510" y="207" width="4" height="48" fill="#a412a8"/><path d="M483 225v43M492 225v43M503 225v43" stroke="#ff80ff" stroke-width="1.500"/><path d="M480 226h30" stroke="#ffa0ff" stroke-width="2"/>
        <path d="M188 359h38q10 0 10 10v26h-48z" fill="url(#pDark)"/><path d="M188 360c8 3 11 8 11 14v21M199 385h37" stroke="#f050f0" fill="none"/>
        <path d="M640 359h-38q-10 0-10 10v26h48z" fill="url(#pDark)"/>
        <rect x="312" y="527" width="38" height="25" fill="#e40ee4"/><rect x="478" y="527" width="38" height="25" fill="#e40ee4"/>
        </g>
        <path d="M311 508q0-18 14-18h11q14 0 14 18v19h-39z" fill="url(#pArch)"/><path d="M323 490v37M337 490v37M312 527q19-14 38 0" stroke="#ff50ff" fill="none"/><path d="M350 527v25" stroke="#8a008a" stroke-width="2"/>
        <path d="M477 508q0-18 14-18h11q14 0 14 18v19h-39z" fill="url(#pArch)"/><path d="M489 490v37M503 490v37M477 527q19-14 38 0" stroke="#ff50ff" fill="none"/><path d="M516 527v25" stroke="#8a008a" stroke-width="2"/>
        <g fill="#333"><circle cx="222" cy="240" r="14"/><circle cx="604" cy="240" r="14"/><circle cx="225" cy="517" r="14"/><circle cx="604" cy="517" r="14"/><circle cx="225" cy="299" r="10"/><circle cx="601" cy="299" r="10"/><circle cx="225" cy="458" r="10"/><circle cx="601" cy="458" r="10"/><circle cx="362" cy="379" r="9"/><circle cx="464" cy="379" r="9"/><circle cx="292" cy="326" r="4"/><circle cx="413" cy="326" r="4"/><circle cx="533" cy="326" r="4"/><circle cx="292" cy="432" r="4"/><circle cx="413" cy="432" r="4"/><circle cx="533" cy="432" r="4"/><circle cx="341" cy="358" r="3"/><circle cx="382" cy="358" r="3"/><circle cx="444" cy="358" r="3"/><circle cx="485" cy="358" r="3"/><circle cx="341" cy="400" r="3"/><circle cx="382" cy="400" r="3"/><circle cx="444" cy="400" r="3"/><circle cx="485" cy="400" r="3"/></g>
        <g fill="#f090f0"><ellipse cx="278" cy="221" rx="2" ry="1"/><ellipse cx="375" cy="222" rx="2" ry="1"/><ellipse cx="412" cy="221" rx="2" ry="1"/><ellipse cx="451" cy="222" rx="2" ry="1"/><ellipse cx="548" cy="221" rx="2" ry="1"/><ellipse cx="278" cy="297" rx="2" ry="1"/><ellipse cx="412" cy="297" rx="2" ry="1"/><ellipse cx="548" cy="297" rx="2" ry="1"/><ellipse cx="202" cy="331" rx="2" ry="1"/><ellipse cx="262" cy="331" rx="2" ry="1"/><ellipse cx="564" cy="331" rx="2" ry="1"/><ellipse cx="624" cy="331" rx="2" ry="1"/><ellipse cx="202" cy="427" rx="2" ry="1"/><ellipse cx="262" cy="427" rx="2" ry="1"/><ellipse cx="564" cy="427" rx="2" ry="1"/><ellipse cx="624" cy="427" rx="2" ry="1"/><ellipse cx="278" cy="461" rx="2" ry="1"/><ellipse cx="412" cy="461" rx="2" ry="1"/><ellipse cx="548" cy="461" rx="2" ry="1"/><ellipse cx="278" cy="537" rx="2" ry="1"/><ellipse cx="375" cy="537" rx="2" ry="1"/><ellipse cx="412" cy="537" rx="2" ry="1"/><ellipse cx="451" cy="537" rx="2" ry="1"/><ellipse cx="548" cy="537" rx="2" ry="1"/></g>
        <path d="M616 373a19 21 0 0 1 24-20v41a19 21 0 0 1-24-21z" fill="#e00828"/><path d="M640 352a16 21 0 0 1 0 42z" fill="#3e48d6"/><circle cx="635" cy="389" r="2.500" fill="#ff8a30"/>
        <path d="M0 373h828M635 115v560" stroke="#bdbdbd" stroke-width="1"/>
        <circle cx="635" cy="373" r="8.500" fill="none" stroke="#fff"/><path d="M625 373h20M635 363v20" stroke="#fff" stroke-width="1.500"/>
        <path d="M413 297l-2 28v50h4v-50z" fill="#3f9060"/><path d="M425 378l30-1.500 32 1.500-32 1.500z" fill="#f02828"/>
        <circle cx="413" cy="379" r="2.500" fill="#0a32d0"/><rect x="418" y="373" width="6" height="6" fill="#a040e0"/>
        <text class="axl" x="417" y="303">YM</text><text class="axl" x="417" y="337">YC</text>
        <rect x="45" y="610" width="19" height="18" fill="#a9a9a9"/><path d="M45 628v-30" stroke="#2a9a48" stroke-width="2"/><path d="M45 628h28" stroke="#d83030" stroke-width="2"/><circle cx="45" cy="628" r="2.500" fill="#2a50e0"/>
        <text class="axt ay" x="43" y="597">Y</text><text class="axt ax" x="76" y="631">X</text>
      </svg>
      <div class="logo">
        <svg class="logo-mark" viewBox="0 0 120 60" aria-hidden="true">
          <circle cx="52" cy="11" r="5.500" fill="#ee6a20"/>
          <path d="M62 16c-12-2-26 6-28 18-1 10 8 16 16 16 3 0 5-1 7-2-8-2-14-6-13-14 2-10 14-15 24-13-1-2-3-4-6-5z" fill="#1e4fa8"/>
          <path d="M63 5c12 3 20 14 17 26-2 9-9 16-16 18 4-6 10-12 9-24-1-7-5-12-10-15l3-2 z" fill="#1a3f9a"/>
          <path d="M60 24c-6 6-8 14-4 22 6-6 8-14 4-22z" fill="#1d72b8"/>
          <path d="M40 53c8-4 18 3 26 0 6-2 12-2 18-1-8 3-12 6-20 6-9 0-16-4-24-5z" fill="#123a8e"/>
          <path d="M62 3c5-1 9-1 12 0l-5 2z" fill="#2a9a9a"/>
        </svg>
        <div class="logo-cn">千言教育</div>
        <div class="logo-en">QIANYAN EDUCATION</div>
      </div>
      <div class="cap cap1">没有激流则谈不上勇进，</div>
      <div class="cap cap2">没有山峰则谈不上攀登。</div>
    </div>
    <aside class="panel">
      <div class="p-title"><span class="p-check"></span><strong>工序导航器 - 几何</strong></div>
      <div class="p-table">
        <div class="p-head"><span class="c1">名称</span><span class="c2">刀轨</span></div>
        <div class="p-body">
          <div class="p-row"><span class="c1 mono">GEOMETRY</span></div>
          <div class="p-row alt"><span class="c1 node"><svg class="folder" viewBox="0 0 12 12"><path d="M1 2h4l1 1h5v8H1z" fill="#eed890" stroke="#998"/><rect x="5" y="5" width="5" height="5" fill="#7a5ac0"/></svg>未用项</span></div>
          <div class="p-row"><span class="c1 node n2"><span class="plus">+</span><svg class="folder" viewBox="0 0 12 12"><path d="M3 1v8h8" stroke="#2538c0" fill="none"/><path d="M3 9l-2 2" stroke="#d02020"/><path d="M3 5l6-3" stroke="#2a9a48"/><rect x="7" y="8" width="3" height="3" fill="#d02020"/></svg><span class="mono">MCS_MILL</span></span></div>
          <div class="p-fill"></div>
        </div>
        <div class="p-hs"><span class="hs-a">‹</span><span class="hs-t"></span><span class="hs-b">›</span></div>
      </div>
      <div class="p-grip"><span></span></div>
    </aside>
    <nav class="tabs">
      <svg class="tab-gear"><use href="#gear"/></svg>
      <span class="tab t15"><svg class="ti"><use href="#t1"/></svg></span>
      <span class="tab t4"><svg class="ti"><use href="#t2"/></svg></span>
      <span class="tab t5"><svg class="ti"><use href="#t3"/></svg></span>
      <span class="tab tab-on t4"><svg class="ti"><use href="#t4"/></svg></span>
      <span class="tab t3"><svg class="ti"><use href="#t5"/></svg></span>
      <span class="tab t4"><svg class="ti"><use href="#t6"/></svg></span>
      <span class="tab t5"><svg class="ti"><use href="#t7"/></svg></span>
      <span class="tab t13"><svg class="ti"><use href="#t8"/></svg></span>
      <span class="tab t13"><svg class="ti"><use href="#t9"/></svg></span>
      <span class="tab t13"><svg class="ti"><use href="#t10"/></svg></span>
      <span class="tab t3"><svg class="ti"><use href="#t11"/></svg></span>
      <span class="tab t5"><svg class="ti"><use href="#t12"/></svg></span>
      <span class="tab t4"><svg class="ti"><use href="#t13"/></svg></span>
      <span class="tab t5"><svg class="ti"><use href="#t14"/></svg></span>
      <span class="tab t6"><svg class="ti"><use href="#t15"/></svg></span>
      <span class="tab t5"><svg class="ti"><use href="#t16"/></svg></span>
    </nav>
  </main>
  <div class="bottom">
    <div class="tb tb-b">
      <div class="g g22 pl8"><svg class="ic"><use href="#abs"/></svg><svg class="ic"><use href="#xd"/></svg><svg class="ic"><use href="#dcl"/></svg><svg class="ic"><use href="#al"/></svg><svg class="ic"><use href="#ar"/></svg><svg class="ic"><use href="#dgn"/></svg><svg class="ic"><use href="#sqs"/></svg><svg class="ic"><use href="#stp"/></svg><svg class="ic"><use href="#pkt"/></svg><svg class="ic"><use href="#pcb"/></svg><svg class="ic"><use href="#rr"/></svg><svg class="ic"><use href="#rhb"/></svg><svg class="ic"><use href="#tee"/></svg><svg class="ic"><use href="#stk"/></svg><svg class="ic"><use href="#ibox"/></svg><svg class="ic"><use href="#blk2"/></svg><svg class="ic"><use href="#rbx"/></svg><svg class="ic"><use href="#pb"/></svg><svg class="ic"><use href="#gift"/></svg><svg class="ic"><use href="#cyl"/></svg><svg class="ic"><use href="#rct"/></svg></div><i class="dd"></i>
      <svg class="ic ml3"><use href="#hex"/></svg><i class="dd"></i>
      <div class="g g22 ml3"><svg class="ic"><use href="#xyz"/></svg><svg class="ic"><use href="#redg"/></svg><svg class="ic"><use href="#ord"/></svg><svg class="ic"><use href="#text2"/></svg><svg class="ic"><use href="#paleb"/></svg><svg class="ic"><use href="#lamp"/></svg><svg class="ic"><use href="#ring"/></svg></div><i class="dd"></i>
    </div>
  </div>
  <footer class="status"><span class="st st1"></span><span class="st st2"><svg class="st-ic" viewBox="0 0 12 12"><rect x="1" y="1" width="10" height="10" fill="#c8d4e8" stroke="#567"/><rect x="3.500" y="3" width="5" height="5" fill="#456"/></svg></span><span class="st st3"></span></footer>
  <div class="botline"></div>
</div>
</body>
</html>
```

FILE: styles.css
```css
html,body{margin:0;padding:0;width:1102px;height:720px;overflow:hidden;background:#111}
body{font-family:"Noto Sans CJK SC","Liberation Sans",sans-serif;font-size:9px;color:#222}
.defs{position:absolute;width:0;height:0;overflow:hidden}
.app{display:flex;flex-direction:column;width:1102px;height:720px;filter:blur(.4px)}
.topline{height:3px;background:#111;border-bottom:1px solid #f4f4f4}
.menubar{height:18px;display:flex;align-items:center;background:linear-gradient(#e9e9e9,#dedede);padding-left:4px;position:relative}
.menu-ic{width:14px;height:14px;margin-right:4px;flex:none;display:block}
.m{white-space:nowrap;font-size:9px;line-height:12px;color:#2a2a2a;flex:none}
.m40{width:40px}.m44{width:44px}.m48{width:48px}.m66{width:66px}.m79{width:79px}
.winbtns{margin-left:auto;display:flex;gap:1px;padding-right:7px}
.wb{width:12px;height:11px;border:1px solid #8a8a8a;border-radius:2px;background:#e2e2e2;font:9px/10px "DejaVu Sans",sans-serif;text-align:center;color:#444}
.row{display:flex;align-items:center;background:linear-gradient(90deg,#d8d8d8,#cfcfcf);flex:none}
.r1{height:23px;background:linear-gradient(#e0e0e0,#d6d6d6)}
.r2{height:25px;background:linear-gradient(#dadada,#cfcfcf)}
.r3{height:25px;background:linear-gradient(#d4d4d4,#c8c8c8);border-bottom:0}
.r4{height:20px;background:linear-gradient(#e2e2e2,#d6d6d6);padding-left:3px;gap:0;border-top:1px solid #aaa;box-sizing:border-box}
.tb{display:flex;align-items:center;height:100%;background:linear-gradient(#e2e2e2,#d6d6d6);box-sizing:border-box}
.tb1{width:895px;padding-left:6px}
.tb2{width:935px;padding-left:6px}
.tb3{width:920px;padding-left:0}
.tb-b{width:690px;padding-left:0}
.g{display:flex;align-items:center;flex:none}
.g22{gap:2.500px}.g3{gap:3px}
.pl13{padding-left:13px}.pl8{padding-left:8px}
.ml1{margin-left:1px}.ml3{margin-left:3px}.ml5{margin-left:5px}.ml7{margin-left:7px}.ml9{margin-left:9px}.ml11{margin-left:11px}.ml13{margin-left:13px}
.ic{width:20px;height:20px;flex:none;display:block}
.ic-s{width:15px;height:15px;flex:none;display:block}
.ic-l{width:24px;height:24px;flex:none;display:block}
.dd{width:8px;height:20px;flex:none;display:block;position:relative}
.dd::after{content:"";position:absolute;left:2px;top:11px;border:2px solid transparent;border-top:3px solid #222;border-bottom:0}
.dd.end{margin-left:auto;margin-right:5px}
.start{font-size:9px;margin-left:3px;width:18px;flex:none}
.search{flex:none;width:80px;height:17px;margin-left:8px;box-sizing:border-box;border:1px solid #bfc4cc;background:#eef0f2;display:flex;align-items:center;justify-content:space-between;padding:0 2px;color:#8a8a8a;font-size:9px}
.active{background:#fff;border:1px solid #777;width:26px;height:22px;display:flex;align-items:center;justify-content:center;flex:none}
.active-s{background:#fff;border:1px solid #888;width:17px;height:16px;display:flex;align-items:center;justify-content:center;flex:none}
.select{height:12px;background:#fff;display:flex;align-items:center;justify-content:space-between;box-sizing:border-box;font-size:9px;line-height:12px;padding-left:1px;flex:none;border:1px solid #9a9a9a}
.sel1{width:85px}.sel2{width:88px;margin-left:5px}
.drop{width:12px;height:100%;background:#3e62a8;position:relative;flex:none;border-left:1px solid #ddd}
.drop::after{content:"";position:absolute;left:2px;top:3px;border:3px solid transparent;border-top:4px solid #fff;border-bottom:0}
.main{display:flex;height:560px;flex:none}
.viewport{width:828px;height:560px;background:#333;position:relative;flex:none;overflow:hidden}
.scene{display:block;width:828px;height:560px}
.axl{font:10px "Liberation Sans",sans-serif;fill:#b070b0}
.axt{font:9px "Liberation Sans",sans-serif}
.ay{fill:#2a9a48}.ax{fill:#c03030}
.logo{position:absolute;left:120px;top:471px;width:119px;height:89px;background:#fff;display:flex;flex-direction:column;align-items:center;overflow:hidden}
.logo-mark{display:block;width:119px;height:59.500px;flex:none}
.logo-cn{font-size:21px;line-height:21px;color:#333;height:21px;letter-spacing:.5px;margin-top:-3px;font-weight:400;flex:none}
.logo-en{font:700 7.500px/9px "Liberation Sans",sans-serif;color:#333;margin-top:1px;letter-spacing:.1px;flex:none}
.cap{position:absolute;color:#ededed;font-size:20px;line-height:26px;letter-spacing:4.200px;white-space:nowrap;font-weight:300}
.cap1{left:280px;top:505px}
.cap2{left:461px;top:530px}
.panel{width:248px;height:560px;background:#ececec;flex:none;display:flex;flex-direction:column;box-sizing:border-box;padding:3px 4px 0 8px}
.p-title{height:20px;display:flex;align-items:center;gap:8px;font-size:9.500px;flex:none;padding-left:2px}
.p-title strong{letter-spacing:.4px;font-weight:700}
.p-check{width:9px;height:8px;border:1px solid #222;background:#f5f5f5}
.p-table{height:524px;flex:none;display:flex;flex-direction:column;background:#fff;border:1px solid #9a9a9a;box-sizing:border-box}
.p-head{height:13px;display:flex;background:linear-gradient(#f2f2f2,#d0d0d0);flex:none;font-size:9.500px;line-height:13px}
.c1{width:145px;box-sizing:border-box;padding-left:4px;display:block;flex:none}
.c2{padding-left:4px;border-left:1px solid #aaa}
.p-body{flex:1;min-height:0;display:flex;flex-direction:column;background:linear-gradient(90deg,transparent 144.500px,#444 144.500px,#444 145.500px,transparent 145.500px)}
.p-row{height:14.600px;flex:none;display:flex;align-items:center;font-size:9px;line-height:14px}
.alt{background:linear-gradient(90deg,#f5f5f5 144.500px,#444 144.500px,#444 145.500px,#f5f5f5 145.500px)}
.mono{font:8px "Liberation Mono",monospace;letter-spacing:-.1px;color:#444}
.p-row .mono{padding-left:2px}
.node{display:flex;align-items:center;gap:2px;padding-left:14px}
.n2{padding-left:3px}
.n2 .mono{padding-left:0}
.plus{width:5px;height:5px;border:1px solid #aaa;font:6px/5px "DejaVu Sans",sans-serif;text-align:center;color:#555;margin-right:2px;flex:none}
.folder{width:12px;height:12px;flex:none}
.p-fill{flex:1;background:linear-gradient(90deg,transparent 144.500px,#444 144.500px,#444 145.500px,transparent 145.500px),repeating-linear-gradient(#fff 0,#fff 14.600px,#f5f5f5 14.600px,#f5f5f5 29.200px)}
.p-hs{height:13px;flex:none;display:flex;align-items:center;background:#f4f4f4;border-top:1px solid #e0e0e0;font:11px/11px "DejaVu Sans",sans-serif;color:#333}
.hs-a{width:12px;text-align:center;flex:none}
.hs-t{width:103px;height:11px;background:#c4c4c4;flex:none}
.hs-b{margin-left:auto;width:12px;text-align:center;flex:none}
.p-grip{height:12px;display:flex;justify-content:center;align-items:center;flex:none}
.p-grip span{width:44px;height:3px;background:#c4c4c4}
.tabs{flex:1;background:#9a9a9a;display:flex;flex-direction:column;align-items:flex-start;padding-left:2px;border-right:4px solid #7a7a7a;min-width:0}
.tab-gear{width:14px;height:14px;margin:4px 0 0 4px;flex:none;display:block}
.tab{width:20px;height:26px;background:#cdcdcd;border-radius:2px 0 0 2px;display:flex;align-items:center;justify-content:center;flex:none}
.t3{margin-top:3px}.t4{margin-top:4px}.t5{margin-top:5px}.t6{margin-top:6px}.t13{margin-top:13px}.t15{margin-top:15px}
.tab-on{width:22px;height:30px;background:#f0f0f0}
.ti{width:20px;height:20px;display:block}
.bottom{height:25px;flex:none;background:linear-gradient(#d8d8d8,#c9c9c9)}
.status{height:15px;flex:none;background:linear-gradient(#e2e2e2,#d4d4d4);display:flex;align-items:center}
.st{display:block;height:100%;box-sizing:border-box;border-right:1px solid #c2c2c2;flex:none}
.st1{width:1032px}.st2{width:54px;display:flex;align-items:center;justify-content:center}.st3{width:16px;border:0}
.st-ic{width:11px;height:11px}
.botline{height:5px;background:#1c1c1c;flex:none}
```
